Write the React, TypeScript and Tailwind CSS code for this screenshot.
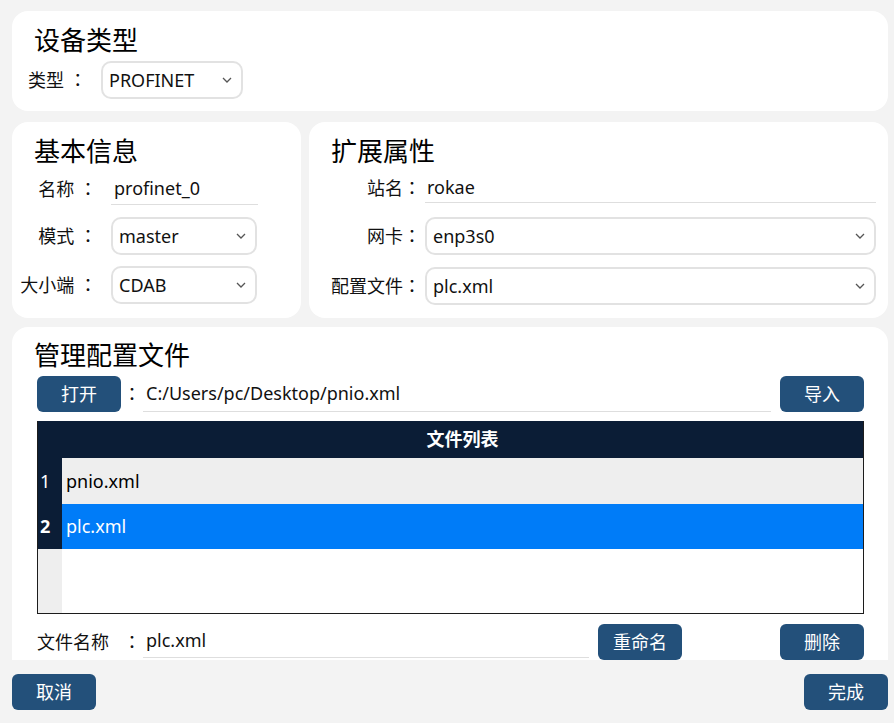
const BTN = "flex h-[36px] w-[84px] shrink-0 items-center justify-center rounded-[6px] bg-[#23507a] text-[18px] text-white"

// full-width colon with the glyph centred in its box
function Colon() {
  return <span className="font-['Noto_Sans_CJK_JP',sans-serif]">：</span>
}

function Chevron() {
  return (
    <svg width="10" height="6" viewBox="0 0 10 6" className="shrink-0">
      <path d="M1 1l4 4 4-4" fill="none" stroke="#555" strokeWidth="1.3" />
    </svg>
  )
}

function Select({ value, className = "" }: { value: string; className?: string }) {
  return (
    <div
      className={`flex h-[38px] items-center justify-between rounded-[10px] border-2 border-[#e2e2e2] pl-[6px] pr-[9px] ${className}`}
    >
      <span>{value}</span>
      <Chevron />
    </div>
  )
}

function Card({ className = "", children }: { className?: string; children: React.ReactNode }) {
  return <div className={`flex flex-col rounded-2xl bg-white ${className}`}>{children}</div>
}

function Title({ text }: { text: string }) {
  return <h2 className="pl-[22px] text-[26px] leading-[34px] text-black">{text}</h2>
}

export default function App() {
  return (
    <div className="h-[723px] w-[894px] bg-[#f3f3f3] font-['Noto_Sans','Noto_Sans_CJK_SC',sans-serif] text-[18px] text-[#111]">
      <div className="flex h-[660px] flex-col overflow-hidden pl-[12px] pr-[6px] pt-[11px]">
        {/* device type */}
        <Card className="h-[100px] shrink-0 pt-[12px]">
          <Title text="设备类型" />
          <div className="mt-[4px] flex items-center pl-[16px]">
            <span className="w-[73px]">
              类型 <Colon />
            </span>
            <Select value="PROFINET" className="w-[142px]" />
          </div>
        </Card>

        <div className="mt-[11px] flex shrink-0 gap-[8px]">
          {/* basic info */}
          <Card className="h-[196px] w-[289px] shrink-0 pt-[12px]">
            <Title text="基本信息" />
            <div className="mt-[4px] flex h-[33px] items-center">
              <span className="w-[85px] text-right">
                名称 <Colon />
              </span>
              <div className="ml-[14px] flex h-full w-[147px] items-center border-b border-[#dedede] pl-[3px]">
                profinet_0
              </div>
            </div>
            <div className="mt-[12px] flex items-center">
              <span className="w-[85px] text-right">
                模式 <Colon />
              </span>
              <Select value="master" className="ml-[14px] w-[146px]" />
            </div>
            <div className="mt-[11px] flex items-center">
              <span className="w-[85px] text-right">
                大小端 <Colon />
              </span>
              <Select value="CDAB" className="ml-[14px] w-[146px]" />
            </div>
          </Card>

          {/* extended attributes */}
          <Card className="h-[196px] flex-1 pr-[12px] pt-[12px]">
            <Title text="扩展属性" />
            <div className="mt-[4px] flex h-[31px] items-center pl-[22px]">
              <span className="w-[90px] text-right">
                站名<Colon />
              </span>
              <div className="ml-[4px] flex h-full flex-1 items-center border-b border-[#dedede] pl-[2px]">rokae</div>
            </div>
            <div className="mt-[14px] flex items-center pl-[22px]">
              <span className="w-[90px] text-right">
                网卡<Colon />
              </span>
              <Select value="enp3s0" className="ml-[4px] flex-1" />
            </div>
            <div className="mt-[12px] flex items-center pl-[22px]">
              <span className="w-[90px] text-right">
                配置文件<Colon />
              </span>
              <Select value="plc.xml" className="ml-[4px] flex-1" />
            </div>
          </Card>
        </div>

        {/* config file management */}
        <div className="mt-[9px] flex shrink-0 flex-col rounded-t-2xl bg-white pb-[40px] pl-[25px] pr-[24px] pt-[11px]">
          <h2 className="-ml-[3px] text-[26px] leading-[34px] text-black">管理配置文件</h2>
          <div className="mt-[4px] flex h-[36px] items-center">
            <button className={BTN}>打开</button>
            <span className="w-[22px] text-center">
              <Colon />
            </span>
            <div className="flex h-full flex-1 items-center border-b border-[#dedede] pl-[3px]">
              C:/Users/pc/Desktop/pnio.xml
            </div>
            <button className={`${BTN} ml-[9px]`}>导入</button>
          </div>

          <div className="mt-[9px] border-x border-b border-[#1c1c1c]">
            <div className="flex h-[37px] bg-[#0b1d36] text-white">
              <div className="w-[24px]" />
              <div className="flex flex-1 items-center justify-center font-bold">文件列表</div>
            </div>
            <div className="flex h-[46px] bg-[#eeeeee]">
              <div className="flex w-[24px] items-center bg-[#0b1d36] pl-[2px] text-white">1</div>
              <div className="flex flex-1 items-center pl-[4px] text-black">pnio.xml</div>
            </div>
            <div className="flex h-[45px] bg-[#007cf8]">
              <div className="flex w-[24px] items-center bg-[#0b1d36] pl-[2px] font-bold text-white">2</div>
              <div className="flex flex-1 items-center pl-[4px] text-white">plc.xml</div>
            </div>
            <div className="flex h-[64px] bg-white">
              <div className="w-[24px] bg-[#eeeeee]" />
            </div>
          </div>

          <div className="mt-[10px] flex h-[36px] items-center">
            <span className="w-[84px]">文件名称</span>
            <span className="w-[22px] text-center">
              <Colon />
            </span>
            <div className="flex h-[34px] w-[446px] items-center self-start border-b border-[#dedede] pl-[3px]">
              plc.xml
            </div>
            <button className={`${BTN} ml-[9px]`}>重命名</button>
            <button className={`${BTN} ml-auto`}>删除</button>
          </div>
        </div>
      </div>

      <div className="mt-[14px] flex justify-between pl-[12px] pr-[6px]">
        <button className={BTN}>取消</button>
        <button className={`${BTN} w-[83px]`}>完成</button>
      </div>
    </div>
  )
}
